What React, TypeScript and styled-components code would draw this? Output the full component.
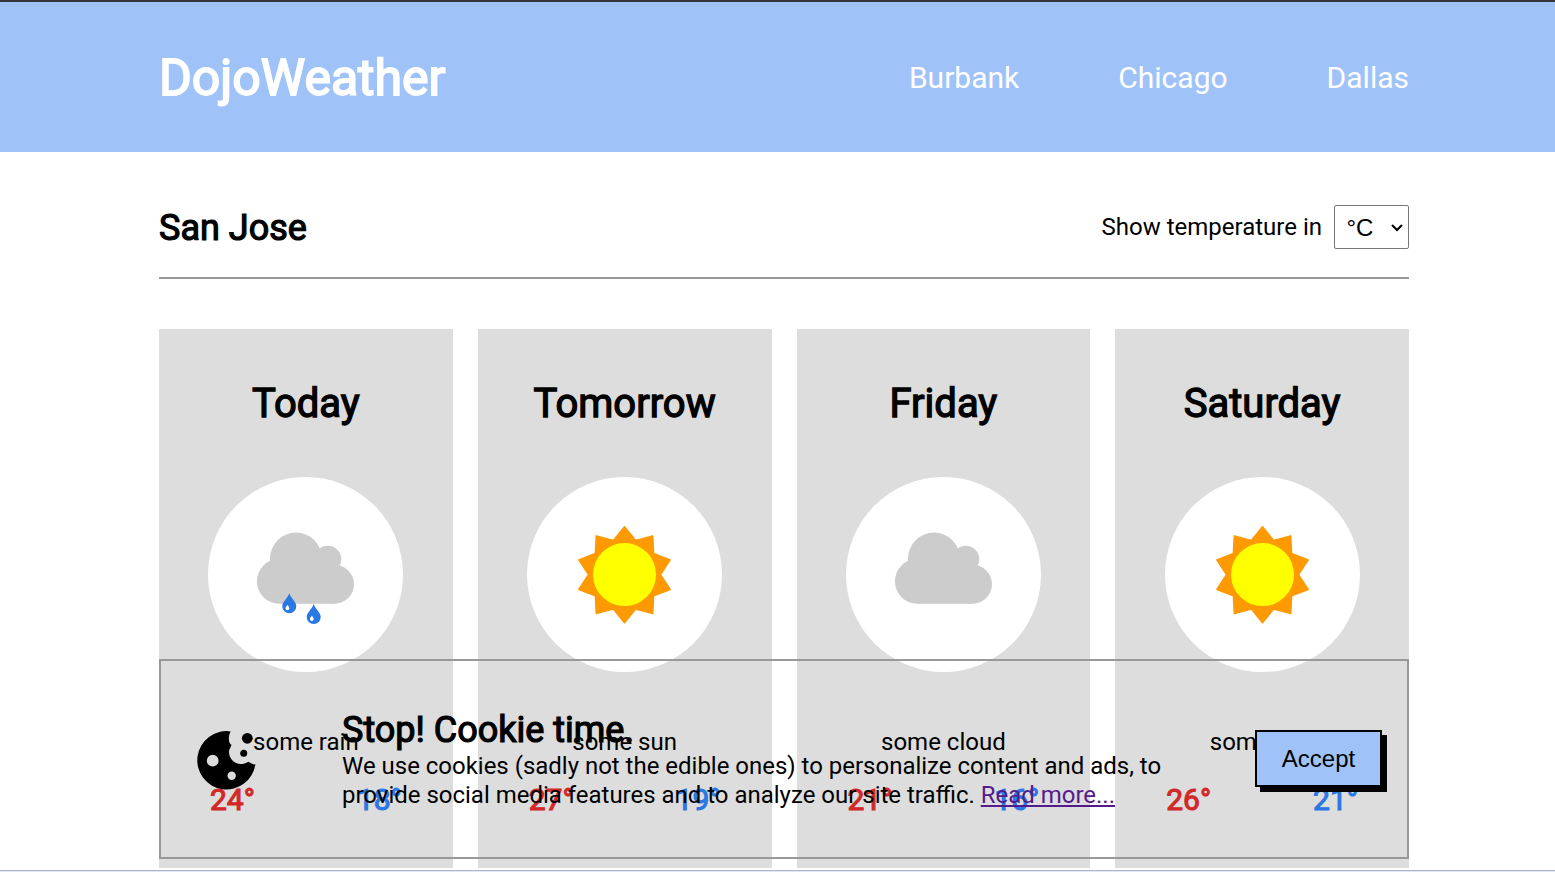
import React from 'react';
import styled, { createGlobalStyle } from 'styled-components';

const GlobalStyle = createGlobalStyle`
  * { box-sizing: border-box; }
  body {
    margin: 0;
    background: #fff;
    color: #000;
    font: 400 24px/29px Roboto, sans-serif;
    overflow: hidden;
  }
  h1, h2, h3, p { margin: 0; font-weight: 400; }
`;

const Page = styled.div`
  position: relative;
  height: 872px;
  display: flex;
  flex-direction: column;
  border-top: 2px solid #333539;
  overflow: hidden;
`;

const Header = styled.header`
  flex: none;
  height: 150px;
  background: #9fc3f8;
  color: #fff;
`;

const Container = styled.div`
  width: 1250px;
  margin-left: 159px;
`;

const HeaderRow = styled(Container)`
  height: 100%;
  padding-top: 2px;
  display: flex;
  align-items: center;
  justify-content: space-between;
`;

const Logo = styled.h1`
  font-size: 50px;
  line-height: 60px;
  -webkit-text-stroke: 1.8px currentColor;
`;

const Nav = styled.nav`
  display: flex;
  gap: 99px;
  font-size: 30px;
  line-height: 36px;
`;

const Content = styled.main`
  flex: none;
  height: 716px;
  overflow: hidden;
`;

const CityBar = styled(Container)`
  height: 127px;
  padding-top: 25px;
  display: flex;
  align-items: center;
  justify-content: space-between;
  border-bottom: 2px solid #999;
`;

const Heading = styled.h2`
  font-size: 36px;
  line-height: 44px;
  -webkit-text-stroke: 1.2px currentColor;
`;

const City = styled(Heading)`
  padding-top: 2px;
`;

const UnitLabel = styled.label`
  display: flex;
  align-items: center;
  gap: 12px;
`;

const SelectBox = styled.span`
  display: grid;
  grid-template-columns: 75px;
  align-items: center;

  > * { grid-area: 1 / 1; }
  > svg {
    justify-self: end;
    margin-right: 5px;
    pointer-events: none;
  }
`;

const Select = styled.select`
  appearance: none;
  width: 75px;
  height: 44px;
  padding: 0 0 0 11.5px;
  border: 1px solid #767676;
  border-radius: 2px;
  background: #fff;
  color: #000;
  font: 400 24px 'Liberation Sans', sans-serif;
`;

const Cards = styled(Container)`
  margin-top: 50px;
  display: grid;
  grid-template-columns: repeat(4, 1fr);
  gap: 25px;
`;

const Card = styled.section`
  height: 539px;
  padding: 51px 49px 0;
  background: #ddd;
  display: flex;
  flex-direction: column;
  align-items: center;
`;

const Day = styled.h3`
  font-size: 40px;
  line-height: 48px;
  margin-bottom: 49px;
  -webkit-text-stroke: 1.3px currentColor;
`;

const Disc = styled.div`
  width: 195px;
  height: 195px;
  flex: none;
  border-radius: 50%;
  background: #fff;
  display: grid;
  place-items: center;

  > svg { overflow: visible; }
`;

const Summary = styled.p`
  margin-top: 56px;
`;

const Temps = styled.div`
  align-self: stretch;
  margin-top: 25px;
  padding: 0 2px;
  display: flex;
  justify-content: space-between;
  font-size: 30px;
  line-height: 36px;
`;

const Temp = styled.span<{ $tone: string }>`
  color: ${(p) => p.$tone};
  -webkit-text-stroke: 1.1px currentColor;
`;

const Footline = styled.div`
  flex: none;
  height: 4px;
  margin-top: auto;
  border-bottom: 1px solid #dfe6f5;
  box-shadow: inset 0 -1px 0 #b4b7cc;
`;

const Banner = styled.aside`
  position: absolute;
  left: 159px;
  top: 657px;
  width: 1250px;
  height: 200px;
  padding: 0 25px 0 36px;
  border: 2px solid #999;
  display: flex;
  align-items: center;
`;

const BannerText = styled.div`
  width: 850px;
  margin-left: 86px;
  font-size: 23.97px;
`;

const More = styled.a`
  color: #551a8b;
  text-decoration: underline;
`;

const Accept = styled.button`
  width: 127px;
  height: 57px;
  margin: 0 0 2px auto;
  padding: 2px 0 0;
  border: 2px solid #000;
  background: #9fc3f8;
  box-shadow: 5px 5px 0 #000;
  color: #000;
  font: 400 24px 'Liberation Sans', sans-serif;
`;

const Cloud = ({ rain }: { rain?: boolean }) => (
  <svg width="97" height="98" viewBox="0 0 97 98">
    <g fill="#ccc">
      <circle cx="39" cy="32.6" r="26" />
      <circle cx="70.8" cy="33.2" r="13.5" />
      <circle cx="22.3" cy="55.3" r="22.4" />
      <circle cx="77.5" cy="58.2" r="19.5" />
      <path d="M22.300 35H75V38.900H77.500V77.700H22.300Z" />
    </g>
    {rain &&
      [[32.3, 67.3], [56.7, 78]].map(([x, y]) => (
        <g key={x} transform={`translate(${x} ${y})`}>
          <path fill="#2a78e4" d="M0 0C1.500 5 7 8.500 7 13A7 7 0 0 1-7 13C-7 8.500-1.500 5 0 0Z" />
          <path fill="#fff" d="M-1.800 11.500C-1 12.800 0 13.500 0 15A1.900 1.900 0 0 1-3.800 15C-3.800 13.500-2.500 12.800-1.800 11.500Z" />
        </g>
      ))}
  </svg>
);

const sunPoints = Array.from({ length: 20 }, (_, i) => {
  const r = i % 2 ? 36 : 48;
  const a = (i * Math.PI) / 10;
  return `${(48.5 + r * Math.sin(a)).toFixed(2)},${(48.7 - r * Math.cos(a)).toFixed(2)}`;
}).join(' ');

const Sun = () => (
  <svg width="97" height="98" viewBox="0 0 97 98">
    <polygon points={sunPoints} fill="#f90" stroke="#f90" strokeWidth="1.5" strokeLinejoin="round" />
    <circle cx="48.5" cy="48.6" r="31.5" fill="#ff0" />
  </svg>
);

const Cookie = () => (
  <svg width="59" height="62" viewBox="0 -2 59 62">
    <path
      fillRule="evenodd"
      d="M33.700 1.400A29.200 29.200 0 1 0 58.400 34.300C56.800 34.600 55.200 34.200 54 33.300C53 32.800 52.300 32 51.300 31.700C48.500 33.600 46 34.100 43 34C36.500 33.500 32 28 32 21.700C32.100 19.500 33.500 17.500 34.600 15C33 13.500 32 12.500 32 10C31.600 7 32.200 4 33.700 1.400ZM15.700 24.800A5.900 5.900 0 1 0 15.700 36.600A5.900 5.900 0 1 0 15.700 24.800ZM34.700 41.500A4.200 4.200 0 1 0 34.700 49.900A4.200 4.200 0 1 0 34.700 41.500Z"
    />
    <circle cx="50.3" cy="8.3" r="5.4" />
    <circle cx="46.7" cy="23.3" r="3.5" />
  </svg>
);

const forecast = [
  { day: 'Today', icon: <Cloud rain />, text: 'some rain', hi: 24, lo: 18 },
  { day: 'Tomorrow', icon: <Sun />, text: 'some sun', hi: 27, lo: 19 },
  { day: 'Friday', icon: <Cloud />, text: 'some cloud', hi: 21, lo: 16 },
  { day: 'Saturday', icon: <Sun />, text: 'some sun', hi: 26, lo: 21 },
];

export default function App() {
  return (
    <>
      <GlobalStyle />
      <Page>
        <Header>
          <HeaderRow>
            <Logo>DojoWeather</Logo>
            <Nav>
              <span>Burbank</span>
              <span>Chicago</span>
              <span>Dallas</span>
            </Nav>
          </HeaderRow>
        </Header>
        <Content>
          <CityBar>
            <City>San Jose</City>
            <UnitLabel>
              Show temperature in
              <SelectBox>
                <Select defaultValue="c">
                  <option value="c">°C</option>
                  <option value="f">°F</option>
                </Select>
                <svg width="14" height="10" viewBox="0 0 14 10">
                  <path d="M2 3L7 8L12 3" fill="none" stroke="#000" strokeWidth="2" />
                </svg>
              </SelectBox>
            </UnitLabel>
          </CityBar>
          <Cards>
            {forecast.map((f) => (
              <Card key={f.day}>
                <Day>{f.day}</Day>
                <Disc>{f.icon}</Disc>
                <Summary>{f.text}</Summary>
                <Temps>
                  <Temp $tone="#d22828">{f.hi}°</Temp>
                  <Temp $tone="#2a78e4">{f.lo}°</Temp>
                </Temps>
              </Card>
            ))}
          </Cards>
        </Content>
        <Footline />
        <Banner>
          <Cookie />
          <BannerText>
            <Heading>Stop! Cookie time.</Heading>
            <p>
              We use cookies (sadly not the edible ones) to personalize content and ads, to provide
              social media features and to analyze our site traffic. <More>Read more...</More>
            </p>
          </BannerText>
          <Accept>Accept</Accept>
        </Banner>
      </Page>
    </>
  );
}
